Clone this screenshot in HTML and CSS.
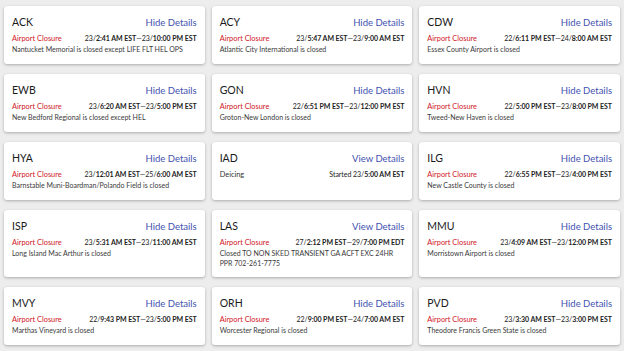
FILE: index.html
```html
<!doctype html>
<html lang="en">
<head>
<meta charset="utf-8">
<title>Airport Events</title>
<link rel="stylesheet" href="styles.css">
</head>
<body>
<div class="grid">
	<div class="card">
		<div class="top"><span class="code">ACK</span><a href="javascript:" class="more">Hide Details</a></div>
		<div class="meta"><span class="type">Airport Closure</span><span class="time">23/<b>2:41 AM EST</b>—23/<b>10:00 PM EST</b></span></div>
		<p class="desc">Nantucket Memorial is closed except LIFE FLT HEL OPS</p>
	</div>
	<div class="card">
		<div class="top"><span class="code">ACY</span><a href="javascript:" class="more">Hide Details</a></div>
		<div class="meta"><span class="type">Airport Closure</span><span class="time">23/<b>5:47 AM EST</b>—23/<b>9:00 AM EST</b></span></div>
		<p class="desc">Atlantic City International is closed</p>
	</div>
	<div class="card">
		<div class="top"><span class="code">CDW</span><a href="javascript:" class="more">Hide Details</a></div>
		<div class="meta"><span class="type">Airport Closure</span><span class="time">22/<b>6:11 PM EST</b>—24/<b>8:00 AM EST</b></span></div>
		<p class="desc">Essex County Airport is closed</p>
	</div>

	<div class="card">
		<div class="top"><span class="code">EWB</span><a href="javascript:" class="more">Hide Details</a></div>
		<div class="meta"><span class="type">Airport Closure</span><span class="time">23/<b>6:20 AM EST</b>—23/<b>5:00 PM EST</b></span></div>
		<p class="desc">New Bedford Regional is closed except HEL</p>
	</div>
	<div class="card">
		<div class="top"><span class="code">GON</span><a href="javascript:" class="more">Hide Details</a></div>
		<div class="meta"><span class="type">Airport Closure</span><span class="time">22/<b>6:51 PM EST</b>—23/<b>12:00 PM EST</b></span></div>
		<p class="desc">Groton-New London is closed</p>
	</div>
	<div class="card">
		<div class="top"><span class="code">HVN</span><a href="javascript:" class="more">Hide Details</a></div>
		<div class="meta"><span class="type">Airport Closure</span><span class="time">22/<b>5:00 PM EST</b>—23/<b>8:00 PM EST</b></span></div>
		<p class="desc">Tweed-New Haven is closed</p>
	</div>

	<div class="card">
		<div class="top"><span class="code">HYA</span><a href="javascript:" class="more">Hide Details</a></div>
		<div class="meta"><span class="type">Airport Closure</span><span class="time">23/<b>12:01 AM EST</b>—25/<b>6:00 AM EST</b></span></div>
		<p class="desc">Barnstable Muni-Boardman/Polando Field is closed</p>
	</div>
	<div class="card">
		<div class="top"><span class="code">IAD</span><a href="javascript:" class="more">View Details</a></div>
		<div class="meta"><span class="type plain">Deicing</span><span class="time">Started 23/<b>5:00 AM EST</b></span></div>
	</div>
	<div class="card">
		<div class="top"><span class="code">ILG</span><a href="javascript:" class="more">Hide Details</a></div>
		<div class="meta"><span class="type">Airport Closure</span><span class="time">22/<b>6:55 PM EST</b>—23/<b>4:00 PM EST</b></span></div>
		<p class="desc">New Castle County is closed</p>
	</div>

	<div class="card">
		<div class="top"><span class="code">ISP</span><a href="javascript:" class="more">Hide Details</a></div>
		<div class="meta"><span class="type">Airport Closure</span><span class="time">23/<b>5:31 AM EST</b>—23/<b>11:00 AM EST</b></span></div>
		<p class="desc">Long Island Mac Arthur is closed</p>
	</div>
	<div class="card">
		<div class="top"><span class="code">LAS</span><a href="javascript:" class="more">View Details</a></div>
		<div class="meta"><span class="type">Airport Closure</span><span class="time">27/<b>2:12 PM EST</b>—29/<b>7:00 PM EDT</b></span></div>
		<p class="desc">Closed TO NON SKED TRANSIENT GA ACFT EXC 24HR PPR 702-261-7775</p>
	</div>
	<div class="card">
		<div class="top"><span class="code">MMU</span><a href="javascript:" class="more">Hide Details</a></div>
		<div class="meta"><span class="type">Airport Closure</span><span class="time">23/<b>4:09 AM EST</b>—23/<b>12:00 PM EST</b></span></div>
		<p class="desc">Morristown Airport is closed</p>
	</div>

	<div class="card">
		<div class="top"><span class="code">MVY</span><a href="javascript:" class="more">Hide Details</a></div>
		<div class="meta"><span class="type">Airport Closure</span><span class="time">22/<b>9:43 PM EST</b>—23/<b>5:00 PM EST</b></span></div>
		<p class="desc">Marthas Vineyard is closed</p>
	</div>
	<div class="card">
		<div class="top"><span class="code">ORH</span><a href="javascript:" class="more">Hide Details</a></div>
		<div class="meta"><span class="type">Airport Closure</span><span class="time">22/<b>9:00 PM EST</b>—24/<b>7:00 AM EST</b></span></div>
		<p class="desc">Worcester Regional is closed</p>
	</div>
	<div class="card">
		<div class="top"><span class="code">PVD</span><a href="javascript:" class="more">Hide Details</a></div>
		<div class="meta"><span class="type">Airport Closure</span><span class="time">23/<b>3:30 AM EST</b>—23/<b>3:00 PM EST</b></span></div>
		<p class="desc">Theodore Francis Green State is closed</p>
	</div>
</div>
</body>
</html>
```

FILE: styles.css
```css
html,body,p{margin:0;padding:0}
html,body{width:100%;height:100%;overflow:hidden}
body{background:#ededed;font-family:Lato,"Open Sans",sans-serif;color:#222}
.grid{display:grid;grid-template-columns:repeat(3,1fr);column-gap:7px;row-gap:10px;padding:6px 4px}
.card{background:#fff;border-radius:3px;box-shadow:0 1px 3px rgba(0,0,0,.28);padding:8px 8px 9px;min-height:41px}
.top{display:flex;justify-content:space-between;align-items:center;height:16px}
.code{font-size:10.5px;color:#1a1a1a}
.more{font-size:9.5px;color:#4352b0;text-decoration:none}
.meta{display:flex;justify-content:space-between;margin-top:3px;font-size:7.4px;line-height:11px}
.type{color:#d0151e}
.type.plain{color:#333}
.time{color:#222;font-size:7px;letter-spacing:-0.05px}
.time b{font-weight:700}
.desc{font-size:7px;line-height:10px;color:#3a3a3a}
```
